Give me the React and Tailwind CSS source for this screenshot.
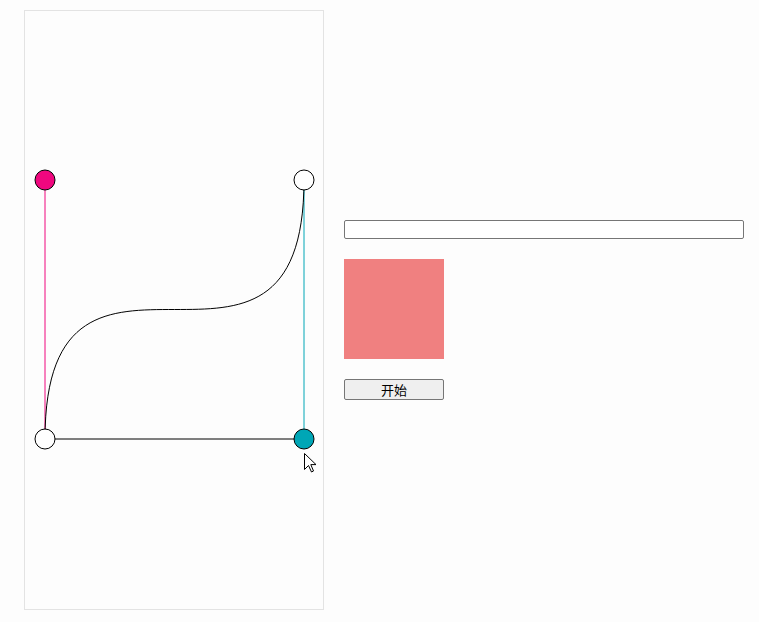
import React, { useState } from "react";

const P0 = { x: 20, y: 428 };
const P3 = { x: 279, y: 169 };

const CurveEditor = ({ cp1, cp2 }) => {
  return (
    <svg width="298" height="598" className="block">
      {/* handle lines */}
      <line x1={P0.x} y1={P0.y} x2={cp1.x} y2={cp1.y} stroke="#f0077f" strokeWidth="1" />
      <line x1={P3.x} y1={P3.y} x2={cp2.x} y2={cp2.y} stroke="#00a6b6" strokeWidth="1" />
      <line x1={P0.x} y1={P0.y} x2={cp2.x} y2={cp2.y} stroke="#000" strokeWidth="1" />
      <path
        d={`M${P0.x} ${P0.y} C${cp1.x} ${cp1.y} ${cp2.x} ${cp2.y} ${P3.x} ${P3.y}`}
        fill="none"
        stroke="#000"
        strokeWidth="1"
      />
      <circle cx={P0.x} cy={P0.y} r="10" fill="#fff" stroke="#000" />
      <circle cx={P3.x} cy={P3.y} r="10" fill="#fff" stroke="#000" />
      <circle cx={cp1.x} cy={cp1.y} r="10" fill="#f0077f" stroke="#000" />
      <circle cx={cp2.x} cy={cp2.y} r="10" fill="#00a6b6" stroke="#000" />
      {/* mouse cursor */}
      <path
        d="M279.5 442.5 L279.5 458.5 L283.5 454.5 L286.5 461 L288.5 460 L285.8 453.6 L291 453.6 Z"
        fill="#fff"
        stroke="#000"
        strokeWidth="1"
        strokeLinejoin="round"
      />
    </svg>
  );
};

export default function App() {
  const [cp1] = useState({ x: 20, y: 169 });
  const [cp2] = useState({ x: 279, y: 428 });

  return (
    <div className="min-h-[622px] w-full bg-[#fdfdfd] font-['Liberation_Sans','Noto_Sans_CJK_SC',sans-serif]">
      <div className="flex items-center gap-5 pl-6 pt-[10px]">
        <div className="w-[300px] h-[600px] border border-[#e3e3e3] box-border shrink-0">
          <CurveEditor cp1={cp1} cp2={cp2} />
        </div>
        <div className="flex flex-col items-start">
          <input
            type="text"
            className="w-[400px] h-[19px] border border-[#767676] rounded-[2px] bg-white"
          />
          <div className="w-[100px] h-[100px] bg-[#f08080] mt-5" />
          <button className="mt-5 w-[100px] h-[21px] border border-[#767676] rounded-[2px] bg-[#efefef] text-[13px] leading-none text-black font-['Noto_Sans_CJK_SC',sans-serif]">
            开始
          </button>
        </div>
      </div>
    </div>
  );
}
